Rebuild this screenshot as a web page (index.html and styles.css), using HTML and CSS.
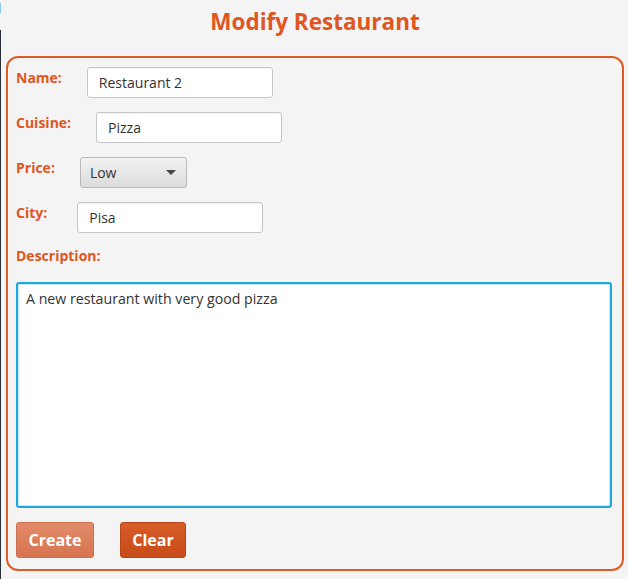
FILE: index.html
```html
<!DOCTYPE html>
<html lang="en">
<head>
<meta charset="utf-8">
<title>Modify Restaurant</title>
<link rel="stylesheet" href="styles.css">
</head>
<body>
<div class="window">
  <h1 class="title">Modify Restaurant</h1>
  <form class="panel">
    <div class="row">
      <label class="label">Name:</label>
      <input class="field" type="text" value="Restaurant 2">
    </div>
    <div class="row">
      <label class="label">Cuisine:</label>
      <input class="field" type="text" value="Pizza">
    </div>
    <div class="row">
      <label class="label">Price:</label>
      <div class="combo"><span>Low</span><span class="arrow"></span></div>
    </div>
    <div class="row row-wide">
      <label class="label">City:</label>
      <input class="field" type="text" value="Pisa">
    </div>
    <label class="label desc-label">Description:</label>
    <textarea class="desc">A new restaurant with very good pizza</textarea>
    <div class="buttons">
      <button type="button" class="btn btn-create">Create</button>
      <button type="button" class="btn btn-clear">Clear</button>
    </div>
  </form>
</div>
</body>
</html>
```
FILE: styles.css
```css
html, body {
  margin: 0;
  height: 100%;
}
body {
  background-color: #f4f4f4;
  background-image: linear-gradient(#f4f4f4 0 3px, #8cc6ee 3px 13px, #f4f4f4 13px 30px, #2b2f3a 30px);
  background-size: 1px 100%;
  background-repeat: no-repeat;
  font-family: "Open Sans", "Liberation Sans", sans-serif;
  color: #333;
}
.window {
  padding: 0 4px 9px 6px;
}
.title {
  margin: 0;
  height: 56px;
  box-sizing: border-box;
  padding-top: 7px;
  text-align: center;
  font-size: 22.5px;
  font-weight: 700;
  color: #e0561f;
  line-height: 30px;
}
.panel {
  margin: 0;
  border: 2px solid #e05a24;
  border-radius: 12px;
  padding: 9px 10px 11px 8px;
  display: flex;
  flex-direction: column;
  gap: 14px;
}
.row {
  display: flex;
  align-items: flex-start;
  gap: 25px;
  height: 31px;
}
.row-wide {
  gap: 30px;
}
.label {
  font-size: 14px;
  font-weight: 700;
  color: #e0561f;
  line-height: 18px;
  padding-top: 2px;
}
.field {
  box-sizing: border-box;
  width: 186px;
  height: 31px;
  border: 1px solid #c6c6c6;
  border-radius: 3px;
  background: #fff;
  padding: 0 11px;
  font-family: inherit;
  font-size: 14px;
  color: #333;
  outline: none;
  box-shadow: inset 0 1px 1px rgba(0,0,0,0.04);
}
.combo {
  box-sizing: border-box;
  width: 107px;
  height: 31px;
  border: 1px solid #b8b8b8;
  border-radius: 3px;
  background: linear-gradient(#f2f2f2, #dcdcdc);
  display: flex;
  align-items: center;
  justify-content: space-between;
  padding: 0 10px 0 9px;
  font-size: 14px;
  color: #333;
}
.arrow {
  width: 0;
  height: 0;
  border-left: 5px solid transparent;
  border-right: 5px solid transparent;
  border-top: 5px solid #444;
}
.desc-label {
  height: 20px;
  padding-top: 0;
  margin-bottom: 1px;
}
.desc {
  box-sizing: border-box;
  height: 226px;
  width: 100%;
  border: 2px solid #1ea6df;
  border-radius: 3px;
  box-shadow: inset 0 0 0 1px #c8e9f8;
  background: #fff;
  padding: 5px 8px;
  font-family: inherit;
  font-size: 14.2px;
  color: #333;
  resize: none;
  outline: none;
  line-height: 20px;
}
.buttons {
  display: flex;
  gap: 26px;
}
.btn {
  height: 36px;
  border-radius: 3px;
  font-family: inherit;
  font-size: 16px;
  font-weight: 700;
  color: #fff;
  padding: 0;
  cursor: pointer;
}
.btn-create {
  width: 78px;
  border: 1px solid #c8704f;
  background: linear-gradient(#e38b6a, #d7744f);
}
.btn-clear {
  width: 66px;
  border: 1px solid #b8461a;
  background: linear-gradient(#d75c28, #c84c19);
}
```
